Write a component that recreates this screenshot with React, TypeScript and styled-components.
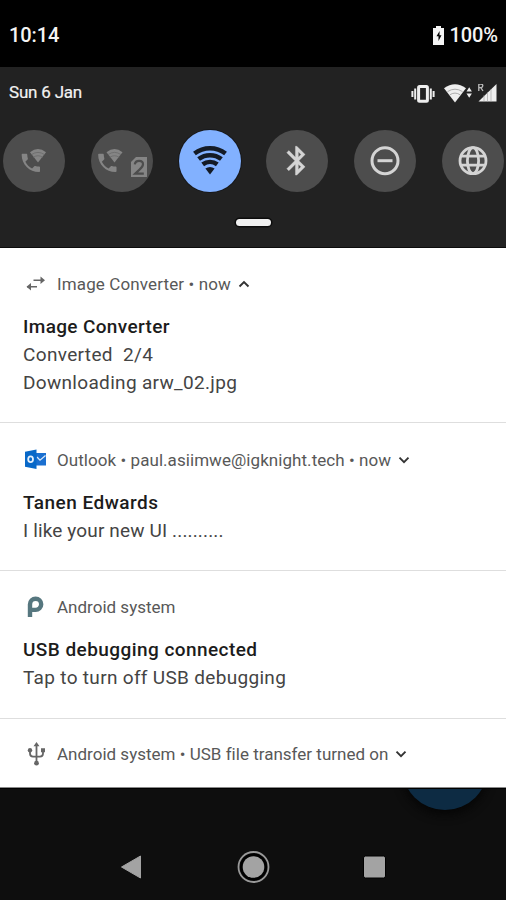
import React from 'react';
import styled, { createGlobalStyle } from 'styled-components';

const GlobalStyle = createGlobalStyle`
  * { box-sizing: border-box; }
  body { margin: 0; background: #0e0e0e; font-family: Roboto, sans-serif; }
  svg { display: block; flex: none; }
`;

const Screen = styled.main`
  width: 506px;
  height: 900px;
  display: flex;
  flex-direction: column;
  overflow: hidden;
  background: #0e0e0e;
`;

const StatusBar = styled.header`
  height: 67px;
  padding: 3px 8px 0 9px;
  display: flex;
  align-items: center;
  justify-content: space-between;
  background: #000;
  color: #f4f4f4;
  font-size: 20px;
  font-weight: 500;
  letter-spacing: -0.1px;
`;

const Battery = styled.div`
  display: flex;
  align-items: center;
  gap: 6px;
`;

const QuickPanel = styled.section`
  height: 181px;
  background: #222;
  border-bottom: 1px solid #0c0c0c;
  display: flex;
  flex-direction: column;
`;

const DateRow = styled.div`
  height: 50px;
  padding: 0 9px;
  display: flex;
  align-items: center;
  justify-content: space-between;
  color: #f2f2f2;
  font-size: 17px;
  -webkit-text-stroke: 0.2px #f2f2f2;
  letter-spacing: -0.2px;
`;

const StatusIcons = styled.div`
  display: flex;
  align-items: center;
  gap: 9px;
  margin-top: 3px;
`;

const Connectivity = styled.div`
  display: flex;
  align-items: center;
  gap: 5px;
`;

const TileRow = styled.div`
  display: flex;
  gap: 25.8px;
  padding: 13px 0 0 3px;
`;

const Tile = styled.button<{ $active?: boolean }>`
  flex: none;
  width: 62px;
  height: 62px;
  padding: 0;
  border: 0;
  border-radius: 50%;
  background: ${(p) => (p.$active ? '#82b1ff' : '#4d4d4d')};
  box-shadow: ${(p) => (p.$active ? '0 0 0 1px #17181b' : 'none')};
`;

const Handle = styled.div`
  width: 35px;
  height: 7px;
  margin: 27px 0 0 236px;
  border-radius: 3.5px;
  background: #f0f0f0;
  box-shadow: 0 0 0 1.5px #0c0c0c;
`;

const Shade = styled.section`
  background: #fff;
`;

const Card = styled.article<{ $height: number; $top: number }>`
  height: ${(p) => p.$height}px;
  padding: ${(p) => p.$top}px 23px 0;
  border-bottom: 1px solid #dedede;
  &:last-child { border-bottom-color: #8a8a8a; }
`;

const CardHeader = styled.div`
  height: 24px;
  display: flex;
  align-items: center;
  color: #585858;
  font-size: 17px;
  white-space: nowrap;
`;

const IconSlot = styled.span`
  width: 34px;
  flex: none;
`;

const HeaderText = styled.span<{ $spacing: number }>`
  letter-spacing: ${(p) => p.$spacing}px;
`;

const Chevron = styled.svg`
  margin-left: 7px;
`;

const Title = styled.h2<{ $spacing: number }>`
  margin: 17px 0 0;
  height: 28px;
  line-height: 28px;
  font-size: 19px;
  font-weight: 500;
  color: #1c1c1c;
  letter-spacing: ${(p) => p.$spacing}px;
`;

const Line = styled.p<{ $spacing: number }>`
  margin: 0;
  height: 28px;
  line-height: 27px;
  font-size: 19px;
  color: #444;
  white-space: pre;
  letter-spacing: ${(p) => p.$spacing}px;
`;

const Backdrop = styled.footer`
  flex: 1;
  position: relative;
  overflow: hidden;
  border-top: 1px solid #000;
  background: #0e0e0e;
`;

const Fab = styled.div`
  position: absolute;
  left: 402px;
  top: -65px;
  width: 86px;
  height: 86px;
  border-radius: 50%;
  background: #0d2b43;
  box-shadow: 0 5px 10px #060606;
`;

const NavBar = styled.nav`
  height: 100%;
  padding: 45px 120px 0 118px;
  display: flex;
  align-items: center;
  justify-content: space-between;
`;

const NavSvg = styled.svg`
  overflow: visible;
`;

const PHONE =
  'M6.62 10.79c1.44 2.83 3.76 5.14 6.59 6.59l2.2-2.2c.27-.27.67-.36 1.02-.24 1.12.37 2.33.57 3.57.57.55 0 1 .45 1 1V20c0 .55-.45 1-1 1-9.39 0-17-7.61-17-17 0-.55.45-1 1-1h3.5c.55 0 1 .45 1 1 0 1.25.2 2.45.57 3.57.11.35.03.74-.25 1.02l-2.2 2.2z';

function WifiCalling({ sim }: { sim?: boolean }) {
  const x = sim ? 6.5 : 18;
  return (
    <svg width="62" height="62" viewBox="0 0 62 62">
      <g transform={`translate(${x} 19)`} fill="#858585">
        <path transform="translate(-2.4 1.7) scale(1.02)" d={PHONE} />
        <path d="M9 3.2Q17-3.4 25 3.2L17 13.5Z" />
        <path d="M10.5 5.6Q17 1.2 23.5 5.6M12.3 8.3Q17 5.2 21.7 8.3" fill="none" stroke="#6a6a6a" strokeWidth=".8" />
      </g>
      {sim && (
        <>
          <path d="M45 27h11v20H40V32z" fill="#858585" />
          <path d="M43.8 34.3Q44.3 30.8 48.1 30.8Q52 30.8 52 34.2Q52 36.5 48.5 39.6L44.2 43.6H52.8" fill="none" stroke="#4d4d4d" strokeWidth="2.2" />
        </>
      )}
    </svg>
  );
}

function WifiTile() {
  const arc = (r: number) => {
    const dx = r * 0.6;
    const dy = r * 0.8;
    return `M${31 - dx} ${44.2 - dy}A${r} ${r} 0 0 1 ${31 + dx} ${44.2 - dy}`;
  };
  return (
    <svg width="62" height="62" viewBox="0 0 62 62" fill="none" stroke="#141b26" strokeWidth="4.6">
      <path d={arc(25.9)} />
      <path d={arc(19)} />
      <path d={arc(12.2)} />
      <path d="M31 44.5l-4.6-6q4.6-3.2 9.2 0z" fill="#141b26" stroke="none" />
    </svg>
  );
}

function BluetoothTile() {
  return (
    <svg width="62" height="62" viewBox="0 0 62 62">
      <path
        transform="translate(13.6 13.4) scale(1.44)"
        fill="#d4d4d4"
        stroke="#d4d4d4"
        strokeWidth=".25"
        d="M17.71 7.71L12 2h-1v7.59L6.41 5 5 6.41 10.59 12 5 17.59 6.41 19 11 14.41V22h1l5.71-5.71-4.3-4.29 4.3-4.29zM13 5.83l1.88 1.88L13 9.59V5.83zm1.88 10.46L13 18.17v-3.76l1.88 1.88z"
      />
    </svg>
  );
}

function DoNotDisturbTile() {
  return (
    <svg width="62" height="62" viewBox="0 0 62 62" fill="none" stroke="#d4d4d4" strokeWidth="3">
      <circle cx="31" cy="30.7" r="13" />
      <path d="M23.5 30.7h15" />
    </svg>
  );
}

function GlobeTile() {
  return (
    <svg width="62" height="62" viewBox="0 0 62 62" fill="none" stroke="#d4d4d4" strokeWidth="2.8">
      <circle cx="31" cy="30.7" r="13" />
      <ellipse cx="31" cy="30.7" rx="5.6" ry="13" />
      <path d="M19.5 26.2h23M19.5 35.2h23" />
    </svg>
  );
}

function ChevronIcon({ up }: { up?: boolean }) {
  return (
    <Chevron width="12" height="8" viewBox="0 0 12 8" fill="none" stroke="#333" strokeWidth="1.9">
      <path d={up ? 'M1.5 6.5L6 2l4.5 4.5' : 'M1.5 1.7L6 6.2l4.5-4.5'} />
    </Chevron>
  );
}

const SwapIcon = () => (
  <svg width="24" height="24" viewBox="0 0 24 24" fill="none" stroke="#666" strokeWidth="1.6">
    <path d="M10.5 8.2H20M4 14.8h10" />
    <path d="M17.5 4.4L22 8.2 17.5 12zM8 11L3.5 14.8 8 18.6z" fill="#666" stroke="none" />
  </svg>
);

const OutlookIcon = () => (
  <svg width="24" height="24" viewBox="0 0 24 24">
    <path d="M13 5h10v12.5H13z" fill="#1a6fd0" />
    <path d="M14 9l3 3.2L22.5 7.5" fill="none" stroke="#d8e8fa" strokeWidth="1.3" />
    <path d="M2 3.8l11.5-2.3v19.5L2 18.7z" fill="#0868c8" />
    <ellipse cx="7.6" cy="11.2" rx="2.4" ry="2.9" fill="none" stroke="#e4effb" strokeWidth="1.8" />
  </svg>
);

const PIcon = () => (
  <svg width="24" height="24" viewBox="0 0 24 24" fill="none" stroke="#56777f" strokeWidth="4.4">
    <path d="M7 22V9.3a5.6 5.6 0 1 1 5.6 5.6H7" />
  </svg>
);

const UsbIcon = () => (
  <svg width="26" height="24" viewBox="0 0 26 24" fill="none" stroke="#666" strokeWidth="1.8">
    <path d="M13.5 3v18M7 9v2.6q0 3 3 3h7q3 0 3-3V8" />
    <path d="M10.5 4.3L13.5 0l3 4.3zM18 6.3h4v4h-4z" fill="#666" stroke="none" />
    <circle cx="7" cy="8.2" r="2.2" fill="#666" stroke="none" />
    <circle cx="13.5" cy="21.2" r="2.4" fill="#666" stroke="none" />
  </svg>
);

export default function App() {
  return (
    <Screen>
      <GlobalStyle />
      <StatusBar>
        <span>10:14</span>
        <Battery>
          <svg width="11" height="19" viewBox="0 0 11 19">
            <path d="M3 0h5v2h3v17H0V2h3z" fill="#f4f4f4" />
            <path d="M6.6 5L3.5 10.2h2V15l3-5.8h-2z" fill="#000" />
          </svg>
          <span>100%</span>
        </Battery>
      </StatusBar>

      <QuickPanel>
        <DateRow>
          <span>Sun 6 Jan</span>
          <StatusIcons>
            <svg width="24" height="20" viewBox="0 0 24 20" fill="none" stroke="#eee">
              <rect x="7.6" y="2.4" width="8.8" height="14.8" rx="1" strokeWidth="3" />
              <path d="M4.2 4.5v11M19.8 4.5v11M1.4 7v6M22.6 7v6" strokeWidth="2" />
            </svg>
            <Connectivity>
              <svg width="28" height="20" viewBox="0 0 28 20">
                <path d="M0 4.2Q11-3.5 22 4.2L11 18.5Z" fill="#eee" />
                <path d="M3.5 7.6Q11 2.8 18.5 7.6M5.8 10.8Q11 7.4 16.2 10.8" fill="none" stroke="#999" strokeWidth=".8" />
                <path d="M22.5 7.5l2.7-4.3 2.7 4.3zM22.5 9.5h5.4l-2.7 4.3z" fill="#eee" />
              </svg>
              <svg width="20" height="20" viewBox="0 0 20 20">
                <path d="M19.5 0v17.5H1.5z" fill="#eee" />
                <path d="M7 11v7M10.5 8v10M14 5v13" stroke="#999" strokeWidth=".6" />
                <path d="M1.8 7V0h2.2a1.7 1.7 0 0 1 0 3.6H1.8M3.8 3.6L6 7" fill="none" stroke="#bbb" strokeWidth="1.3" />
              </svg>
            </Connectivity>
          </StatusIcons>
        </DateRow>
        <TileRow>
          <Tile><WifiCalling /></Tile>
          <Tile><WifiCalling sim /></Tile>
          <Tile $active><WifiTile /></Tile>
          <Tile><BluetoothTile /></Tile>
          <Tile><DoNotDisturbTile /></Tile>
          <Tile><GlobeTile /></Tile>
        </TileRow>
        <Handle />
      </QuickPanel>

      <Shade>
        <Card $height={175} $top={24}>
          <CardHeader>
            <IconSlot><SwapIcon /></IconSlot>
            <HeaderText $spacing={0.12}>Image Converter • now</HeaderText>
            <ChevronIcon up />
          </CardHeader>
          <Title $spacing={0.35}>Image Converter</Title>
          <Line $spacing={0.35}>Converted  2/4</Line>
          <Line $spacing={0.32}>Downloading arw_02.jpg</Line>
        </Card>
        <Card $height={148} $top={24.5}>
          <CardHeader>
            <IconSlot><OutlookIcon /></IconSlot>
            <HeaderText $spacing={0.06}>Outlook • paul.asiimwe@igknight.tech • now</HeaderText>
            <ChevronIcon />
          </CardHeader>
          <Title $spacing={0.47}>Tanen Edwards</Title>
          <Line $spacing={0.14}>I like your new UI ..........</Line>
        </Card>
        <Card $height={148} $top={24}>
          <CardHeader>
            <IconSlot><PIcon /></IconSlot>
            <HeaderText $spacing={0.01}>Android system</HeaderText>
          </CardHeader>
          <Title $spacing={0.44}>USB debugging connected</Title>
          <Line $spacing={0.32}>Tap to turn off USB debugging</Line>
        </Card>
        <Card $height={69} $top={22.5}>
          <CardHeader>
            <IconSlot><UsbIcon /></IconSlot>
            <HeaderText $spacing={0.01}>Android system • USB file transfer turned on</HeaderText>
            <ChevronIcon />
          </CardHeader>
        </Card>
      </Shade>

      <Backdrop>
        <Fab />
        <NavBar>
          <NavSvg width="26" height="28" viewBox="0 0 26 28">
            <path d="M3.5 14L22.5 3v22z" fill="#a3a3a3" stroke="#a3a3a3" strokeWidth="1" strokeLinejoin="round" />
          </NavSvg>
          <NavSvg width="34" height="34" viewBox="0 0 34 34">
            <circle cx="17.5" cy="17" r="13.5" fill="#000" />
            <circle cx="17.5" cy="17" r="10.8" fill="#a3a3a3" />
            <circle cx="17.5" cy="17" r="15" fill="none" stroke="#999" strokeWidth="1.8" />
          </NavSvg>
          <NavSvg width="24" height="24" viewBox="0 0 24 24">
            <rect x="1.5" y="1" width="22" height="22" rx="2" fill="#a3a3a3" stroke="#000" />
          </NavSvg>
        </NavBar>
      </Backdrop>
    </Screen>
  );
}
